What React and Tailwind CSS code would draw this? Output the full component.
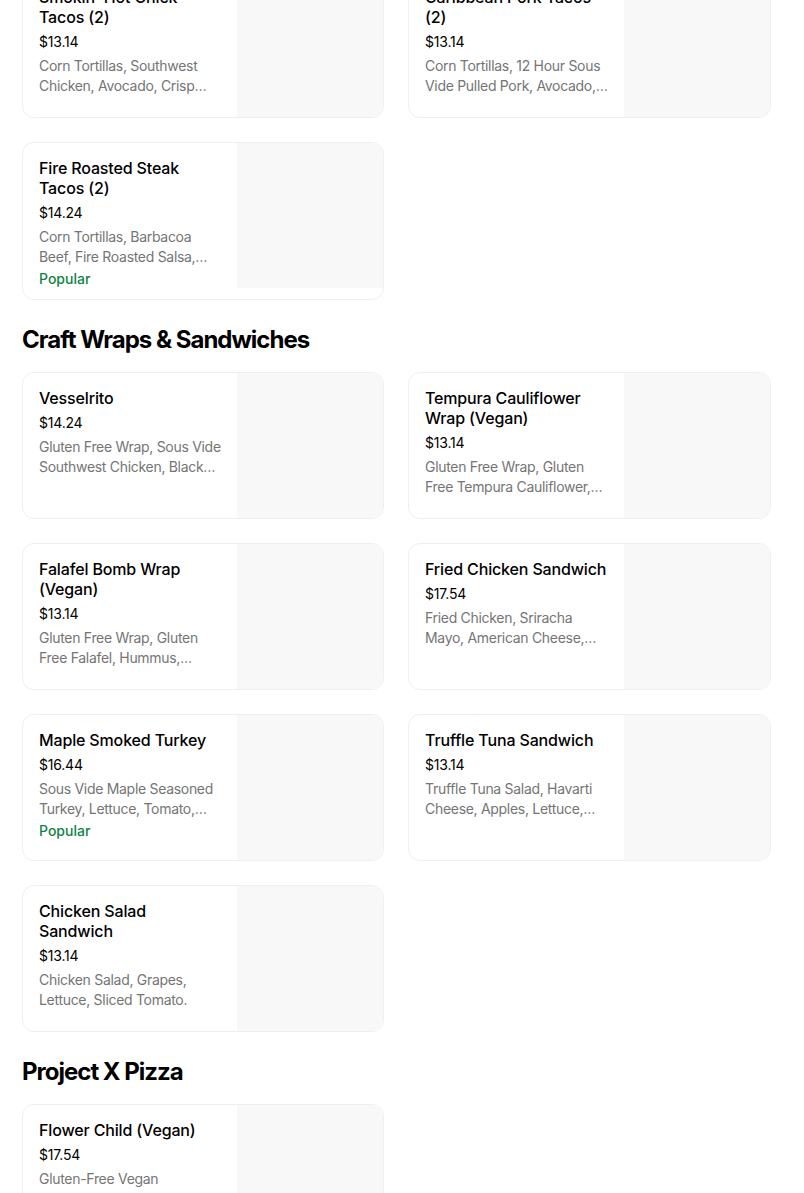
import React from "react";

const sections = [
  {
    title: null,
    items: [
      {
        name: "Smokin' Hot Chick Tacos (2)",
        price: "$13.14",
        desc: "Corn Tortillas, Southwest Chicken, Avocado, Crisp Romaine, Pico de Gallo, Chipotle Aioli.",
      },
      {
        name: "Caribbean Pork Tacos (2)",
        price: "$13.14",
        desc: "Corn Tortillas, 12 Hour Sous Vide Pulled Pork, Avocado, Mango Salsa, Pickled Onion.",
      },
      {
        name: "Fire Roasted Steak Tacos (2)",
        price: "$14.24",
        desc: "Corn Tortillas, Barbacoa Beef, Fire Roasted Salsa, Cotija Cheese, Cilantro.",
        popular: true,
      },
    ],
  },
  {
    title: "Craft Wraps & Sandwiches",
    items: [
      {
        name: "Vesselrito",
        price: "$14.24",
        desc: "Gluten Free Wrap, Sous Vide Southwest Chicken, Black Beans, Rice, Avocado, Salsa.",
      },
      {
        name: "Tempura Cauliflower Wrap (Vegan)",
        price: "$13.14",
        desc: "Gluten Free Wrap, Gluten Free Tempura Cauliflower, Buffalo Sauce, Lettuce, Tomato.",
      },
      {
        name: "Falafel Bomb Wrap (Vegan)",
        price: "$13.14",
        desc: "Gluten Free Wrap, Gluten Free Falafel, Hummus, Cucumber, Tomato, Tahini.",
      },
      {
        name: "Fried Chicken Sandwich",
        price: "$17.54",
        desc: "Fried Chicken, Sriracha Mayo, American Cheese, Pickles, Brioche Bun.",
      },
      {
        name: "Maple Smoked Turkey",
        price: "$16.44",
        desc: "Sous Vide Maple Seasoned Turkey, Lettuce, Tomato, Swiss Cheese, Honey Mustard.",
        popular: true,
      },
      {
        name: "Truffle Tuna Sandwich",
        price: "$13.14",
        desc: "Truffle Tuna Salad, Havarti Cheese, Apples, Lettuce, Tomato, Sourdough.",
      },
      {
        name: "Chicken Salad Sandwich",
        price: "$13.14",
        desc: "Chicken Salad, Grapes, Lettuce, Sliced Tomato.",
      },
    ],
  },
  {
    title: "Project X Pizza",
    items: [
      {
        name: "Flower Child (Vegan)",
        price: "$17.54",
        desc: "Gluten-Free Vegan Cauliflower-Crust, Tomato Sauce, Vegan Mozzarella, Seasonal Vegetables.",
      },
    ],
  },
];

function Card({ item }) {
  return (
    <div className="flex items-start overflow-hidden rounded-xl border border-[#efefef] bg-white">
      <div className="min-w-0 flex-1 pb-[10px] pl-4 pr-[14px] pt-[15px]">
        <div className="text-[16px] font-medium leading-5 tracking-[-0.15px] text-black">{item.name}</div>
        <div className="mt-[5px] text-[14px] leading-5 tracking-[-0.2px] text-black">{item.price}</div>
        <div className="mt-1 line-clamp-2 text-[14px] leading-5 tracking-[-0.3px] text-[#757575]">
          {item.desc}
        </div>
        {item.popular && (
          <div className="mt-[2px] text-[14px] font-medium leading-5 text-[#0e8345]">Popular</div>
        )}
      </div>
      <div className="h-[145px] w-[146px] shrink-0 bg-[#f8f8f8]" />
    </div>
  );
}

export default function App() {
  return (
    <div
      className="min-h-[1193px] w-[804px] overflow-hidden bg-white"
      style={{ fontFamily: "Inter, 'Liberation Sans', sans-serif" }}
    >
      <div className="-mt-[29px] ml-[22px] w-[749px]">
        {sections.map((s, i) => (
          <div key={i}>
            {s.title && (
              <h2 className="mb-4 mt-6 text-[24px] font-bold leading-8 tracking-[-1px] text-black">
                {s.title}
              </h2>
            )}
            <div className="grid grid-cols-[362px_363px] gap-6">
              {s.items.map((it) => (
                <Card key={it.name} item={it} />
              ))}
            </div>
          </div>
        ))}
      </div>
    </div>
  );
}
